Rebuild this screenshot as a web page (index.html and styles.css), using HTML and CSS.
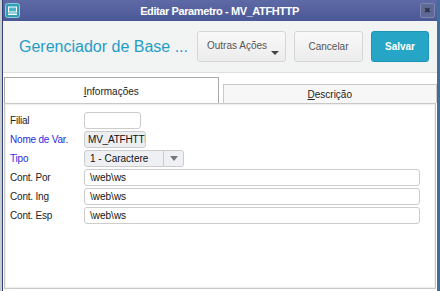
FILE: index.html
```html
<!DOCTYPE html>
<html lang="pt">
<head>
    <meta charset="UTF-8">
    <title>Editar Parametro - MV_ATFHTTP</title>
    <link rel="stylesheet" href="styles.css">
</head>
<body>
    <div class="window">
        <div class="titlebar">
            <span class="app-icon">
                <svg width="15" height="15" viewBox="0 0 15 15">
                    <rect x="0.5" y="0.5" width="14" height="14" rx="2" fill="#2f9fb8" stroke="#8fcbd8"/>
                    <rect x="3" y="3.5" width="9" height="6" fill="#ffffff"/>
                    <rect x="4" y="4.5" width="7" height="4" fill="#4fb3c8"/>
                    <rect x="3" y="10.5" width="9" height="1.5" fill="#ffffff"/>
                </svg>
            </span>
            <span class="title">Editar Parametro - MV_ATFHTTP</span>
            <span class="close-btn">&#x2716;</span>
        </div>

        <div class="header">
            <h1>Gerenciador de Base ...</h1>
            <div class="actions">
                <button class="btn btn-more">Outras Ações<span class="caret"></span></button>
                <button class="btn btn-cancel">Cancelar</button>
                <button class="btn btn-save">Salvar</button>
            </div>
        </div>

        <div class="tabs">
            <div class="tab active"><u>I</u>nformações</div>
            <div class="tab"><u>D</u>escrição</div>
        </div>

        <div class="panel">
            <div class="row">
                <label>Filial</label>
                <div class="field w-filial"></div>
            </div>
            <div class="row">
                <label class="req">Nome de Var.</label>
                <div class="field w-nome readonly">MV_ATFHTTP</div>
            </div>
            <div class="row">
                <label class="req">Tipo</label>
                <div class="select">
                    <span class="select-value">1 - Caractere</span>
                    <span class="select-arrow"></span>
                </div>
            </div>
            <div class="row">
                <label>Cont. Por</label>
                <div class="field w-full">\web\ws</div>
            </div>
            <div class="row">
                <label>Cont. Ing</label>
                <div class="field w-full">\web\ws</div>
            </div>
            <div class="row">
                <label>Cont. Esp</label>
                <div class="field w-full">\web\ws</div>
            </div>
        </div>
    </div>
</body>
</html>
```

FILE: styles.css
```css
* {
    margin: 0;
    padding: 0;
    box-sizing: border-box;
}
html, body {
    height: 100%;
    overflow: hidden;
}
body {
    font-family: "Liberation Sans", Arial, sans-serif;
    background: #3f6f9c;
    padding-right: 3px;
    border-left: 2px solid #c9ccd2;
}
.window {
    height: 291px;
    display: flex;
    flex-direction: column;
    background: #ffffff;
    border-left: 1px solid #2f3f70;
}
.titlebar {
    height: 21px;
    display: flex;
    align-items: center;
    padding: 0 2px 0 2px;
    background: linear-gradient(#5d6aa6, #4b5896);
    color: #ffffff;
}
.app-icon {
    display: flex;
    width: 16px;
}
.app-icon svg {
    display: block;
}
.title {
    flex: 1;
    text-align: center;
    font-size: 11px;
    font-weight: bold;
    letter-spacing: -0.4px;
    padding-right: 2px;
}
.close-btn {
    width: 15px;
    height: 15px;
    display: flex;
    align-items: center;
    justify-content: center;
    font-size: 8px;
    color: #2c2f40;
    background: #5e6995;
    border: 1px solid #7c86b0;
    border-radius: 2px;
}
.header {
    height: 52px;
    display: flex;
    align-items: center;
    justify-content: space-between;
    padding: 0 8px 0 16px;
    background: #f2f3f3;
    border-bottom: 1px solid #dedede;
}
.header h1 {
    font-size: 16px;
    font-weight: normal;
    white-space: nowrap;
    color: #1f9dc7;
    margin-top: 1px;
}
.actions {
    display: flex;
    gap: 8px;
}
.btn {
    height: 31px;
    font-family: inherit;
    font-size: 10px;
    color: #555555;
    background: linear-gradient(#f9f9f9, #ececec);
    border: 1px solid #d6d6d6;
    border-radius: 3px;
}
.btn-more {
    width: 89px;
    position: relative;
    text-align: left;
    padding-left: 9px;
    padding-bottom: 2px;
}
.caret {
    position: absolute;
    right: 6px;
    bottom: 6px;
    border-left: 4px solid transparent;
    border-right: 4px solid transparent;
    border-top: 4px solid #444444;
}
.btn-cancel {
    width: 69px;
}
.btn-save {
    width: 58px;
    color: #ffffff;
    font-weight: bold;
    background: #26a5c7;
    border-color: #1e94b6;
}
.tabs {
    display: flex;
    align-items: flex-end;
    gap: 4px;
    padding: 4px 0 0 1px;
    background: #ffffff;
}
.tab {
    height: 19px;
    flex: 1;
    display: flex;
    align-items: center;
    justify-content: center;
    font-size: 10px;
    color: #222222;
    background: #f7f7f7;
    border: 1px solid #c9c9c9;
    border-bottom: none;
}
.tab.active {
    height: 26px;
    background: #ffffff;
    border-color: #a9a9a9;
    padding-top: 2px;
}
.panel {
    flex: 1;
    margin: 0 1px 2px 1px;
    padding: 8px 15px 0 5px;
    border: 1px solid #c8c8c8;
    box-shadow: inset 0 0 0 1px #eeeeee;
    display: flex;
    flex-direction: column;
    gap: 2px;
}
.row {
    display: flex;
    align-items: center;
    height: 17px;
}
.row label {
    width: 74px;
    font-size: 10px;
    letter-spacing: -0.2px;
    color: #222222;
}
.row label.req {
    color: #2a2ae0;
}
.field {
    height: 17px;
    font-size: 10px;
    color: #111111;
    line-height: 15px;
    padding-left: 5px;
    white-space: nowrap;
    overflow: hidden;
    border: 1px solid #cccccc;
    border-radius: 3px;
    background: #ffffff;
}
.w-filial {
    width: 57px;
}
.w-nome {
    width: 62px;
    padding-left: 3px;
    letter-spacing: -0.2px;
}
.readonly {
    background: #eceef1;
}
.w-full {
    flex: 1;
}
.select {
    width: 100px;
    height: 17px;
    display: flex;
    font-size: 10px;
    color: #111111;
    border: 1px solid #cccccc;
    border-radius: 3px;
    background: #eef0f4;
}
.select-value {
    flex: 1;
    padding-left: 5px;
    line-height: 15px;
    border-right: 1px solid #cccccc;
}
.select-arrow {
    width: 19px;
    display: flex;
    align-items: center;
    justify-content: center;
}
.select-arrow::after {
    content: "";
    border-left: 4px solid transparent;
    border-right: 4px solid transparent;
    border-top: 5px solid #777777;
}
```
